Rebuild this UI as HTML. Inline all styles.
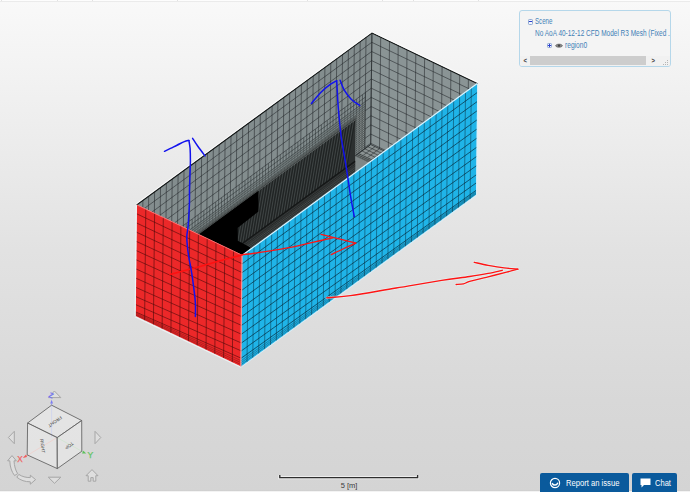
<!DOCTYPE html>
<html>
<head>
<meta charset="utf-8">
<title>Scene</title>
<style>
html,body{margin:0;padding:0;}
body{width:690px;height:492px;overflow:hidden;position:relative;font-family:"Liberation Sans",sans-serif;
background:linear-gradient(to bottom,#f9f9f9 0px,#efefef 110px,#e2e2e2 250px,#d8d8d8 400px,#d4d4d4 492px);}
#topline{position:absolute;left:0;top:0;width:690px;height:2px;background:linear-gradient(#fdfdfd 0,#fdfdfd 50%,#ebebeb 50%,#ebebeb 100%);}
#topline i{position:absolute;top:0;width:1px;height:1px;background:#e2e2e2;}
#botline{position:absolute;left:0;top:490px;width:690px;height:2px;background:linear-gradient(#cecece 0,#d2d2d2 45%,#f2f2f2 55%,#f4f4f4 100%);}
svg{position:absolute;left:0;top:0;}
#panel{position:absolute;left:519px;top:9.5px;width:150px;height:55.5px;border:1px solid #b5d7ea;border-radius:3px;background:#f4f4f4;box-sizing:content-box;overflow:hidden;}
#panel .t{position:absolute;white-space:nowrap;color:#3f80b6;font-size:8.3px;line-height:10px;transform-origin:0 50%;}
#sb{position:absolute;left:0px;top:45px;width:150px;height:10.5px;background:#f1f1f1;}
#sb .thumb{position:absolute;left:10px;top:0px;width:116px;height:9.6px;background:#cdcdcd;}
#sb .a{position:absolute;top:-0.5px;font-size:8px;line-height:11px;color:#444;font-weight:bold;transform:scaleX(.75);}
.ico{position:absolute;width:3.6px;height:3.6px;border:0.9px solid #8fa9d2;border-radius:1.3px;background:#f4f7fd;box-sizing:content-box;}
.ico i{position:absolute;left:0.5px;top:1.4px;width:2.6px;height:0.8px;background:#2d3fd0;}
.ico b{position:absolute;left:1.4px;top:0.5px;width:0.8px;height:2.6px;background:#2d3fd0;}
.btn{position:absolute;top:473px;height:19px;background:#0a5a9c;color:#fff;font-size:8.4px;border-radius:2px 2px 0 0;}
.btn span{position:absolute;top:5px;line-height:10px;white-space:nowrap;transform-origin:0 50%;}
#scaletxt{position:absolute;left:318.8px;width:60px;text-align:center;top:481px;font-size:8px;color:#3a3a3a;line-height:10px;transform:scaleX(.94);}
.cube{font-family:"Liberation Sans",sans-serif;font-size:4.6px;fill:#484848;}
</style>
</head>
<body>
<div id="topline"><i style="left:1px"></i><i style="left:57px"></i><i style="left:92px"></i><i style="left:177px"></i><i style="left:307px"></i><i style="left:382px"></i><i style="left:413px"></i><i style="left:478px"></i></div>
<svg id="mesh" width="690" height="492" viewBox="0 0 690 492">
<defs><clipPath id="topclip"><polygon points="137.0,204.7 242.3,255.0 477.2,83.4 371.9,33.1" /></clipPath><clipPath id="bandclip"><polygon points="136.2,280.1 355.8,119.7 355.2,174.4 118.0,347.7 118.6,293.0" /></clipPath></defs>
<g clip-path="url(#topclip)"><polygon points="137.0,204.7 371.9,33.1 370.7,144.5 135.8,316.1" fill="#838d8e"/><polygon points="371.9,33.1 477.2,83.4 476.0,194.8 370.7,144.5" fill="#8a9495"/><polygon points="135.8,316.1 370.7,144.5 476.0,194.8 241.1,366.4" fill="#7f8787"/><polygon points="136.2,275.7 365.3,108.4 364.8,148.8 135.8,316.1" fill="#848c8c"/><path d="M137.0 204.7L136.4 260.0M142.9 200.4L142.3 255.7M148.7 196.1L148.1 251.4M154.6 191.8L154.0 247.1M160.5 187.5L159.9 242.8M166.4 183.2L165.8 238.6M172.2 179.0L171.6 234.3M178.1 174.7L177.5 230.0M184.0 170.4L183.4 225.7M189.9 166.1L189.3 221.4M195.7 161.8L195.1 217.1M201.6 157.5L201.0 212.8M207.5 153.2L206.9 208.5M213.3 148.9L212.7 204.2M219.2 144.6L218.6 199.9M225.1 140.3L224.5 195.6M231.0 136.1L230.4 191.4M236.8 131.8L236.2 187.1M242.7 127.5L242.1 182.8M248.6 123.2L248.0 178.5M254.5 118.9L253.9 174.2M260.3 114.6L259.7 169.9M266.2 110.3L265.6 165.6M272.1 106.0L271.5 161.3M277.9 101.7L277.3 157.0M283.8 97.4L283.2 152.8M289.7 93.2L289.1 148.5M295.6 88.9L295.0 144.2M301.4 84.6L300.8 139.9M307.3 80.3L306.7 135.6M313.2 76.0L312.6 131.3M319.0 71.7L318.5 127.0M324.9 67.4L324.3 122.7M330.8 63.1L330.2 118.4M336.7 58.8L336.1 114.1M342.5 54.5L341.9 109.8M348.4 50.3L347.8 105.6M354.3 46.0L353.7 101.3M360.2 41.7L359.6 97.0M366.0 37.4L364.8 148.8M371.9 33.1L370.7 144.5M136.9 213.9L371.8 42.3M136.8 223.1L371.7 51.5M136.7 232.2L371.6 60.6M136.6 241.4L371.5 69.8M136.5 250.6L371.4 79.0M136.4 259.8L371.3 88.2M365.3 101.6L371.2 97.4M365.2 110.8L371.1 106.5M365.1 120.0L371.0 115.7M365.0 129.2L370.9 124.9M364.9 138.4L370.8 134.1M364.8 147.5L370.7 143.3" fill="none" stroke="#23282a" stroke-width="0.75" stroke-opacity="0.75"/><path d="M136.4 260.0L136.3 268.9M139.3 257.9L139.2 266.8M142.3 255.7L142.2 264.6M145.2 253.6L145.1 262.5M148.1 251.4L148.1 260.3M151.1 249.3L151.0 258.2M154.0 247.1L153.9 256.0M157.0 245.0L156.9 253.9M159.9 242.8L159.8 251.7M162.8 240.7L162.7 249.6M165.8 238.6L165.7 247.4M168.7 236.4L168.6 245.3M171.6 234.3L171.5 243.2M174.6 232.1L174.5 241.0M177.5 230.0L177.4 238.9M180.4 227.8L180.4 236.7M183.4 225.7L183.3 234.6M186.3 223.5L186.2 232.4M189.3 221.4L189.2 230.3M192.2 219.2L192.1 228.1M195.1 217.1L195.0 226.0M198.1 215.0L198.0 223.9M201.0 212.8L200.9 221.7M203.9 210.7L203.8 219.6M206.9 208.5L206.8 217.4M209.8 206.4L209.7 215.3M212.7 204.2L212.7 213.1M215.7 202.1L215.6 211.0M218.6 199.9L218.5 208.8M221.6 197.8L221.5 206.7M224.5 195.6L224.4 204.6M227.4 193.5L227.3 202.4M230.4 191.4L230.3 200.3M233.3 189.2L233.2 198.1M236.2 187.1L236.1 196.0M239.2 184.9L239.1 193.8M242.1 182.8L242.0 191.7M245.0 180.6L244.9 189.5M248.0 178.5L247.9 187.4M250.9 176.3L250.8 185.2M253.9 174.2L253.8 183.1M256.8 172.1L256.7 181.0M259.7 169.9L259.6 178.8M262.7 167.8L262.6 176.7M265.6 165.6L265.5 174.5M268.5 163.5L268.4 172.4M271.5 161.3L271.4 170.2M274.4 159.2L274.3 168.1M277.3 157.0L277.2 165.9M280.3 154.9L280.2 163.8M283.2 152.8L283.1 161.6M286.2 150.6L286.1 159.5M289.1 148.5L289.0 157.4M292.0 146.3L291.9 155.2M295.0 144.2L294.9 153.1M297.9 142.0L297.8 150.9M300.8 139.9L300.7 148.8M303.8 137.7L303.7 146.6M306.7 135.6L306.6 144.5M309.6 133.4L309.5 142.3M312.6 131.3L312.5 140.2M315.5 129.2L315.4 138.1M318.5 127.0L318.4 135.9M321.4 124.9L321.3 133.8M324.3 122.7L324.2 131.6M327.3 120.6L327.2 129.5M330.2 118.4L330.1 127.3M333.1 116.3L333.0 125.2M336.1 114.1L336.0 123.0M339.0 112.0L338.9 120.9M341.9 109.8L341.8 118.7M344.9 107.7L344.8 116.6M347.8 105.6L347.7 114.5M350.8 103.4L350.7 112.3M353.7 101.3L353.6 110.2M356.6 99.1L356.5 108.0M359.6 97.0L359.5 105.9M362.5 94.8L362.4 103.7M365.4 92.7L365.3 101.6M136.4 264.4L365.4 97.1M136.3 268.9L365.3 101.6" fill="none" stroke="#23282a" stroke-width="0.7" stroke-opacity="0.7"/><path d="M136.3 268.9L136.2 275.7M139.2 266.8L139.2 273.6M142.2 264.6L142.1 271.4M145.1 262.5L145.0 269.3M148.1 260.3L148.0 267.1M151.0 258.2L150.9 265.0M153.9 256.0L153.9 262.8M156.9 253.9L156.8 260.7M159.8 251.7L159.7 258.5M162.7 249.6L162.7 256.4M165.7 247.4L165.6 254.2M168.6 245.3L168.5 252.1M171.5 243.2L171.5 250.0M174.5 241.0L174.4 247.8M177.4 238.9L177.3 245.7M180.4 236.7L180.3 243.5M183.3 234.6L183.2 241.4M186.2 232.4L186.2 239.2M189.2 230.3L189.1 237.1M192.1 228.1L192.0 234.9M195.0 226.0L195.0 232.8M198.0 223.9L197.9 230.7M200.9 221.7L200.8 228.5M203.8 219.6L203.8 226.4M206.8 217.4L206.7 224.2M209.7 215.3L209.6 222.1M212.7 213.1L212.6 219.9M215.6 211.0L215.5 217.8M218.5 208.8L218.5 215.6M221.5 206.7L221.4 213.5M224.4 204.6L224.3 211.3M227.3 202.4L227.3 209.2M230.3 200.3L230.2 207.1M233.2 198.1L233.1 204.9M236.1 196.0L236.1 202.8M239.1 193.8L239.0 200.6M242.0 191.7L241.9 198.5M244.9 189.5L244.9 196.3M247.9 187.4L247.8 194.2M250.8 185.2L250.7 192.0M253.8 183.1L253.7 189.9M256.7 181.0L256.6 187.8M259.6 178.8L259.6 185.6M262.6 176.7L262.5 183.5M265.5 174.5L265.4 181.3M268.4 172.4L268.4 179.2M271.4 170.2L271.3 177.0M274.3 168.1L274.2 174.9M277.2 165.9L277.2 172.7M280.2 163.8L280.1 170.6M283.1 161.6L283.0 168.4M286.1 159.5L286.0 166.3M289.0 157.4L288.9 164.2M291.9 155.2L291.9 162.0M294.9 153.1L294.8 159.9M297.8 150.9L297.7 157.7M300.7 148.8L300.7 155.6M303.7 146.6L303.6 153.4M306.6 144.5L306.5 151.3M309.5 142.3L309.5 149.1M312.5 140.2L312.4 147.0M315.4 138.1L315.3 144.9M318.4 135.9L318.3 142.7M321.3 133.8L321.2 140.6M324.2 131.6L324.2 138.4M327.2 129.5L327.1 136.3M330.1 127.3L330.0 134.1M333.0 125.2L333.0 132.0M336.0 123.0L335.9 129.8M338.9 120.9L338.8 127.7M341.8 118.7L341.8 125.5M344.8 116.6L344.7 123.4M347.7 114.5L347.6 121.3M350.7 112.3L350.6 119.1M353.6 110.2L353.5 117.0M356.5 108.0L356.5 114.8M359.5 105.9L359.4 112.7M362.4 103.7L362.3 110.5M365.3 101.6L365.3 108.4M136.3 271.2L365.3 103.9M136.3 273.4L365.3 106.1M136.2 275.7L365.3 108.4" fill="none" stroke="#23282a" stroke-width="0.65" stroke-opacity="0.6"/><path d="M137.8 267.8L137.7 274.6M140.7 265.7L140.6 272.5M143.6 263.5L143.6 270.3M146.6 261.4L146.5 268.2M149.5 259.2L149.4 266.0M152.5 257.1L152.4 263.9M155.4 255.0L155.3 261.8M158.3 252.8L158.3 259.6M161.3 250.7L161.2 257.5M164.2 248.5L164.1 255.3M167.1 246.4L167.1 253.2M170.1 244.2L170.0 251.0M173.0 242.1L172.9 248.9M175.9 239.9L175.9 246.7M178.9 237.8L178.8 244.6M181.8 235.7L181.7 242.5M184.8 233.5L184.7 240.3M187.7 231.4L187.6 238.2M190.6 229.2L190.6 236.0M193.6 227.1L193.5 233.9M196.5 224.9L196.4 231.7M199.4 222.8L199.4 229.6M202.4 220.6L202.3 227.4M205.3 218.5L205.2 225.3M208.2 216.3L208.2 223.1M211.2 214.2L211.1 221.0M214.1 212.1L214.0 218.9M217.1 209.9L217.0 216.7M220.0 207.8L219.9 214.6M222.9 205.6L222.9 212.4M225.9 203.5L225.8 210.3M228.8 201.3L228.7 208.1M231.7 199.2L231.7 206.0M234.7 197.0L234.6 203.8M237.6 194.9L237.5 201.7M240.5 192.8L240.5 199.6M243.5 190.6L243.4 197.4M246.4 188.5L246.3 195.3M249.4 186.3L249.3 193.1M252.3 184.2L252.2 191.0M255.2 182.0L255.2 188.8M258.2 179.9L258.1 186.7M261.1 177.7L261.0 184.5M264.0 175.6L264.0 182.4M267.0 173.4L266.9 180.2M269.9 171.3L269.8 178.1M272.8 169.2L272.8 176.0M275.8 167.0L275.7 173.8M278.7 164.9L278.6 171.7M281.7 162.7L281.6 169.5M284.6 160.6L284.5 167.4M287.5 158.4L287.5 165.2M290.5 156.3L290.4 163.1M293.4 154.1L293.3 160.9M296.3 152.0L296.3 158.8M299.3 149.9L299.2 156.7M302.2 147.7L302.1 154.5M305.1 145.6L305.1 152.4M308.1 143.4L308.0 150.2M311.0 141.3L310.9 148.1M314.0 139.1L313.9 145.9M316.9 137.0L316.8 143.8M319.8 134.8L319.8 141.6M322.8 132.7L322.7 139.5M325.7 130.5L325.6 137.3M328.6 128.4L328.6 135.2M331.6 126.3L331.5 133.1M334.5 124.1L334.4 130.9M337.4 122.0L337.4 128.8M340.4 119.8L340.3 126.6M343.3 117.7L343.2 124.5M346.3 115.5L346.2 122.3M349.2 113.4L349.1 120.2M352.1 111.2L352.0 118.0M355.1 109.1L355.0 115.9M358.0 107.0L357.9 113.8M360.9 104.8L360.9 111.6M363.9 102.7L363.8 109.5" fill="none" stroke="#23282a" stroke-width="0.5" stroke-opacity="0.3"/><path d="M136.2 276.9L355.9 116.4M136.2 278.0L355.8 117.6M136.2 279.1L355.8 118.7" fill="none" stroke="#1c2020" stroke-width="0.55" stroke-opacity="0.6"/><path d="M355.8 117.3L365.2 110.4M355.8 119.3L365.2 112.4M355.8 121.3L365.2 114.4M355.8 123.3L365.2 116.4M355.8 125.3L365.2 118.4M355.7 127.3L365.1 120.4M355.7 129.3L365.1 122.4M355.7 131.3L365.1 124.4M355.7 133.3L365.1 126.4M355.7 135.3L365.0 128.4M355.6 137.3L365.0 130.4M355.6 139.3L365.0 132.4M355.6 141.3L365.0 134.4M355.6 143.3L365.0 136.4M355.5 145.3L364.9 138.4M355.5 147.3L364.9 140.4M355.5 149.3L364.9 142.4M355.5 151.3L364.9 144.4M355.5 153.3L364.9 146.4M355.4 155.3L364.8 148.4" fill="none" stroke="#1c2020" stroke-width="0.7" stroke-opacity="0.6"/><path d="M136.2 275.7L136.2 280.1M137.7 274.6L137.7 279.0M139.2 273.6L139.1 278.0M140.6 272.5L140.6 276.9M142.1 271.4L142.1 275.8M143.6 270.3L143.5 274.7M145.0 269.3L145.0 273.7M146.5 268.2L146.5 272.6M148.0 267.1L147.9 271.5M149.4 266.0L149.4 270.4M150.9 265.0L150.9 269.4M152.4 263.9L152.3 268.3M153.9 262.8L153.8 267.2M155.3 261.8L155.3 266.2M156.8 260.7L156.7 265.1M158.3 259.6L158.2 264.0M159.7 258.5L159.7 262.9M161.2 257.5L161.1 261.9M162.7 256.4L162.6 260.8M164.1 255.3L164.1 259.7M165.6 254.2L165.6 258.6M167.1 253.2L167.0 257.6M168.5 252.1L168.5 256.5M170.0 251.0L170.0 255.4M171.5 250.0L171.4 254.4M172.9 248.9L172.9 253.3M174.4 247.8L174.4 252.2M175.9 246.7L175.8 251.1M177.3 245.7L177.3 250.1M178.8 244.6L178.8 249.0M180.3 243.5L180.2 247.9M181.7 242.5L181.7 246.9M183.2 241.4L183.2 245.8M184.7 240.3L184.6 244.7M186.2 239.2L186.1 243.6M187.6 238.2L187.6 242.6M189.1 237.1L189.0 241.5M190.6 236.0L190.5 240.4M192.0 234.9L192.0 239.3M193.5 233.9L193.4 238.3M195.0 232.8L194.9 237.2M196.4 231.7L196.4 236.1M197.9 230.7L197.8 235.1M199.4 229.6L199.3 234.0M200.8 228.5L200.8 232.9M202.3 227.4L202.3 231.8M203.8 226.4L203.7 230.8M205.2 225.3L205.2 229.7M206.7 224.2L206.7 228.6M208.2 223.1L208.1 227.5M209.6 222.1L209.6 226.5M211.1 221.0L211.1 225.4M212.6 219.9L212.5 224.3M214.0 218.9L214.0 223.3M215.5 217.8L215.5 222.2M217.0 216.7L216.9 221.1M218.5 215.6L218.4 220.0M219.9 214.6L219.9 219.0M221.4 213.5L221.3 217.9M222.9 212.4L222.8 216.8M224.3 211.3L224.3 215.8M225.8 210.3L225.7 214.7M227.3 209.2L227.2 213.6M228.7 208.1L228.7 212.5M230.2 207.1L230.1 211.5M231.7 206.0L231.6 210.4M233.1 204.9L233.1 209.3M234.6 203.8L234.6 208.2M236.1 202.8L236.0 207.2M237.5 201.7L237.5 206.1M239.0 200.6L239.0 205.0M240.5 199.6L240.4 204.0M241.9 198.5L241.9 202.9M243.4 197.4L243.4 201.8M244.9 196.3L244.8 200.7M246.3 195.3L246.3 199.7M247.8 194.2L247.8 198.6M249.3 193.1L249.2 197.5M250.7 192.0L250.7 196.4M252.2 191.0L252.2 195.4M253.7 189.9L253.6 194.3M255.2 188.8L255.1 193.2M256.6 187.8L256.6 192.2M258.1 186.7L258.0 191.1M259.6 185.6L259.5 190.0M261.0 184.5L261.0 188.9M262.5 183.5L262.4 187.9M264.0 182.4L263.9 186.8M265.4 181.3L265.4 185.7M266.9 180.2L266.9 184.6M268.4 179.2L268.3 183.6M269.8 178.1L269.8 182.5M271.3 177.0L271.3 181.4M272.8 176.0L272.7 180.4M274.2 174.9L274.2 179.3M275.7 173.8L275.7 178.2M277.2 172.7L277.1 177.1M278.6 171.7L278.6 176.1M280.1 170.6L280.1 175.0M281.6 169.5L281.5 173.9M283.0 168.4L283.0 172.8M284.5 167.4L284.5 171.8M286.0 166.3L285.9 170.7M287.5 165.2L287.4 169.6M288.9 164.2L288.9 168.6M290.4 163.1L290.3 167.5M291.9 162.0L291.8 166.4M293.3 160.9L293.3 165.3M294.8 159.9L294.7 164.3M296.3 158.8L296.2 163.2M297.7 157.7L297.7 162.1M299.2 156.7L299.1 161.1M300.7 155.6L300.6 160.0M302.1 154.5L302.1 158.9M303.6 153.4L303.6 157.8M305.1 152.4L305.0 156.8M306.5 151.3L306.5 155.7M308.0 150.2L308.0 154.6M309.5 149.1L309.4 153.5M310.9 148.1L310.9 152.5M312.4 147.0L312.4 151.4M313.9 145.9L313.8 150.3M315.3 144.9L315.3 149.3M316.8 143.8L316.8 148.2M318.3 142.7L318.2 147.1M319.8 141.6L319.7 146.0M321.2 140.6L321.2 145.0M322.7 139.5L322.6 143.9M324.2 138.4L324.1 142.8M325.6 137.3L325.6 141.7M327.1 136.3L327.0 140.7M328.6 135.2L328.5 139.6M330.0 134.1L330.0 138.5M331.5 133.1L331.4 137.5M333.0 132.0L332.9 136.4M334.4 130.9L334.4 135.3M335.9 129.8L335.9 134.2M337.4 128.8L337.3 133.2M338.8 127.7L338.8 132.1M340.3 126.6L340.3 131.0M341.8 125.5L341.7 129.9M343.2 124.5L343.2 128.9M344.7 123.4L344.7 127.8M346.2 122.3L346.1 126.7M347.6 121.3L347.6 125.7M349.1 120.2L349.1 124.6M350.6 119.1L350.5 123.5M352.0 118.0L352.0 122.4M353.5 117.0L353.5 121.4M355.0 115.9L354.9 120.3M356.5 114.8L356.0 155.2M359.4 112.7L359.0 153.1M362.3 110.5L361.9 150.9M365.3 108.4L364.8 148.8" fill="none" stroke="#1c2020" stroke-width="0.6" stroke-opacity="0.45"/><polygon points="136.2,278.5 355.8,118.1 355.8,119.7 136.2,280.1" fill="#101212" fill-opacity="0.3"/><path d="M371.9 33.1L370.7 144.5M380.7 37.3L379.5 148.7M389.5 41.5L388.3 152.9M398.2 45.7L397.0 157.1M407.0 49.9L405.8 161.3M415.8 54.1L414.6 165.5M424.6 58.2L423.4 169.7M433.3 62.4L432.1 173.8M442.1 66.6L440.9 178.0M450.9 70.8L449.7 182.2M459.7 75.0L458.5 186.4M468.4 79.2L467.2 190.6M477.2 83.4L476.0 194.8M371.8 42.3L477.1 92.6M371.7 51.5L477.0 101.8M371.6 60.6L476.9 110.9M371.5 69.8L476.8 120.1M371.4 79.0L476.7 129.3M371.3 88.2L476.6 138.5M371.2 97.4L476.5 147.7M371.1 106.5L476.4 156.8M371.0 115.7L476.3 166.0M370.9 124.9L476.2 175.2M370.8 134.1L476.1 184.4M370.7 143.3L476.0 193.6" fill="none" stroke="#23282a" stroke-width="0.75" stroke-opacity="0.75"/><polygon points="355.4,155.7 370.7,144.5 388.3,152.9 373.0,164.0" fill="#8b9393"/><path d="M359.0 153.1L370.7 144.5M363.3 155.2L375.1 146.6M367.7 157.3L379.5 148.7M372.1 159.4L383.9 150.8M376.5 161.5L388.3 152.9M361.9 150.9L379.4 159.3M364.8 148.8L382.4 157.2M367.8 146.6L385.3 155.0" fill="none" stroke="#23282a" stroke-width="0.8" stroke-opacity="0.7"/><polygon points="355.4,155.7 359.0,153.1 376.5,161.5 373.0,164.0" fill="#737b7b"/><path d="M355.4 155.7L359.0 153.1M357.6 156.7L361.1 154.1M359.8 157.7L363.3 155.2M362.0 158.8L365.5 156.2M364.2 159.8L367.7 157.3M366.4 160.9L369.9 158.3M368.6 161.9L372.1 159.4M370.8 163.0L374.3 160.4M373.0 164.0L376.5 161.5M355.4 155.7L373.0 164.0M356.9 154.6L374.4 163.0M358.4 153.5L375.9 161.9" fill="none" stroke="#1c2020" stroke-width="0.6" stroke-opacity="0.6"/><path d="M355.4 155.7L370.7 144.5M370.7 144.5L388.3 152.9" fill="none" stroke="#23282a" stroke-width="1" stroke-opacity="0.8"/><g clip-path="url(#bandclip)"><polygon points="136.2,280.1 355.8,119.7 355.2,174.4 118.0,347.7 118.6,293.0" fill="#2c3030"/><path d="M118.6 293.0L110.5 339.7M121.5 290.8L113.4 337.6M124.4 288.7L116.4 335.5M127.4 286.5L119.3 333.3M130.3 284.4L122.2 331.2M133.3 282.2L125.2 329.0M136.2 280.1L128.1 326.9M139.1 278.0L131.0 324.7M142.1 275.8L134.0 322.6M145.0 273.7L136.9 320.4M147.9 271.5L139.9 318.3M150.9 269.4L142.8 316.2M153.8 267.2L145.7 314.0M156.7 265.1L148.7 311.9M159.7 262.9L151.6 309.7M162.6 260.8L154.5 307.6M165.6 258.6L157.5 305.4M168.5 256.5L160.4 303.3M171.4 254.4L163.3 301.1M174.4 252.2L166.3 299.0M177.3 250.1L169.2 296.8M180.2 247.9L172.2 294.7M183.2 245.8L175.1 292.6M186.1 243.6L178.0 290.4M189.0 241.5L181.0 288.3M192.0 239.3L183.9 286.1M194.9 237.2L186.8 284.0M197.8 235.1L189.8 281.8M200.8 232.9L192.7 279.7M203.7 230.8L195.6 277.5M206.7 228.6L198.6 275.4M209.6 226.5L201.5 273.3M212.5 224.3L204.5 271.1M215.5 222.2L207.4 269.0M218.4 220.0L210.3 266.8M221.3 217.9L213.3 264.7M224.3 215.8L216.2 262.5M227.2 213.6L219.1 260.4M230.1 211.5L222.1 258.2M233.1 209.3L225.0 256.1M236.0 207.2L227.9 253.9M239.0 205.0L230.9 251.8M241.9 202.9L233.8 249.7M244.8 200.7L236.8 247.5M247.8 198.6L239.7 245.4M250.7 196.4L242.6 243.2M253.6 194.3L245.6 241.1M256.6 192.2L248.5 238.9M259.5 190.0L251.4 236.8M262.4 187.9L254.4 234.6M265.4 185.7L257.3 232.5M268.3 183.6L260.2 230.4M271.3 181.4L263.2 228.2M274.2 179.3L266.1 226.1M277.1 177.1L269.0 223.9M280.1 175.0L272.0 221.8M283.0 172.8L274.9 219.6M285.9 170.7L277.9 217.5M288.9 168.6L280.8 215.3M291.8 166.4L283.7 213.2M294.7 164.3L286.7 211.0M297.7 162.1L289.6 208.9M300.6 160.0L292.5 206.8M303.6 157.8L295.5 204.6M306.5 155.7L298.4 202.5M309.4 153.5L301.3 200.3M312.4 151.4L304.3 198.2M315.3 149.3L307.2 196.0M318.2 147.1L310.2 193.9M321.2 145.0L313.1 191.7M324.1 142.8L316.0 189.6M327.0 140.7L319.0 187.5M330.0 138.5L321.9 185.3M332.9 136.4L324.8 183.2M335.9 134.2L327.8 181.0M338.8 132.1L330.7 178.9M341.7 129.9L333.6 176.7M344.7 127.8L336.6 174.6M347.6 125.7L339.5 172.4M350.5 123.5L342.5 170.3M353.5 121.4L345.4 168.1" fill="none" stroke="#596060" stroke-width="0.9" stroke-opacity="0.45"/><path d="M120.0 291.9L112.0 338.7M123.0 289.8L114.9 336.5M125.9 287.6L117.8 334.4M128.8 285.5L120.8 332.2M131.8 283.3L123.7 330.1M134.7 281.2L126.6 327.9M137.7 279.0L129.6 325.8M140.6 276.9L132.5 323.7M143.5 274.7L135.5 321.5M146.5 272.6L138.4 319.4M149.4 270.4L141.3 317.2M152.3 268.3L144.3 315.1M155.3 266.2L147.2 312.9M158.2 264.0L150.1 310.8M161.1 261.9L153.1 308.6M164.1 259.7L156.0 306.5M167.0 257.6L158.9 304.4M170.0 255.4L161.9 302.2M172.9 253.3L164.8 300.1M175.8 251.1L167.7 297.9M178.8 249.0L170.7 295.8M181.7 246.9L173.6 293.6M184.6 244.7L176.6 291.5M187.6 242.6L179.5 289.3M190.5 240.4L182.4 287.2M193.4 238.3L185.4 285.0M196.4 236.1L188.3 282.9M199.3 234.0L191.2 280.8M202.3 231.8L194.2 278.6M205.2 229.7L197.1 276.5M208.1 227.5L200.0 274.3M211.1 225.4L203.0 272.2M214.0 223.3L205.9 270.0M216.9 221.1L208.9 267.9M219.9 219.0L211.8 265.7M222.8 216.8L214.7 263.6M225.7 214.7L217.7 261.5M228.7 212.5L220.6 259.3M231.6 210.4L223.5 257.2M234.6 208.2L226.5 255.0M237.5 206.1L229.4 252.9M240.4 204.0L232.3 250.7M243.4 201.8L235.3 248.6M246.3 199.7L238.2 246.4M249.2 197.5L241.2 244.3M252.2 195.4L244.1 242.1M255.1 193.2L247.0 240.0M258.0 191.1L250.0 237.9M261.0 188.9L252.9 235.7M263.9 186.8L255.8 233.6M266.9 184.6L258.8 231.4M269.8 182.5L261.7 229.3M272.7 180.4L264.6 227.1M275.7 178.2L267.6 225.0M278.6 176.1L270.5 222.8M281.5 173.9L273.5 220.7M284.5 171.8L276.4 218.6M287.4 169.6L279.3 216.4M290.3 167.5L282.3 214.3M293.3 165.3L285.2 212.1M296.2 163.2L288.1 210.0M299.1 161.1L291.1 207.8M302.1 158.9L294.0 205.7M305.0 156.8L296.9 203.5M308.0 154.6L299.9 201.4M310.9 152.5L302.8 199.2M313.8 150.3L305.8 197.1M316.8 148.2L308.7 195.0M319.7 146.0L311.6 192.8M322.6 143.9L314.6 190.7M325.6 141.7L317.5 188.5M328.5 139.6L320.4 186.4M331.4 137.5L323.4 184.2M334.4 135.3L326.3 182.1M337.3 133.2L329.2 179.9M340.3 131.0L332.2 177.8M343.2 128.9L335.1 175.7M346.1 126.7L338.1 173.5M349.1 124.6L341.0 171.4M352.0 122.4L343.9 169.2M354.9 120.3L346.9 167.1" fill="none" stroke="#0c0e0e" stroke-width="0.9" stroke-opacity="0.45"/><polygon points="118.1,334.2 355.4,160.9 355.2,174.4 118.0,347.7" fill="#383c3c"/><polygon points="118.1,338.7 355.3,165.4 355.2,174.4 118.0,347.7" fill="#444949"/><path d="M118.1 335.2L355.4 161.9M118.1 337.3L355.3 164.0M118.1 339.4L355.3 166.1M118.0 341.5L355.3 168.2M118.0 343.6L355.3 170.3M118.0 345.7L355.3 172.4" fill="none" stroke="#1a1c1c" stroke-width="0.7" stroke-opacity="0.7"/><path d="M118.1 334.2L125.0 342.5M119.6 333.1L126.5 341.4M121.1 332.0L128.0 340.4M122.5 331.0L129.4 339.3M124.0 329.9L130.9 338.2M125.5 328.8L132.4 337.2M126.9 327.7L133.8 336.1M128.4 326.7L135.3 335.0M129.9 325.6L136.8 333.9M131.3 324.5L138.2 332.9M132.8 323.4L139.7 331.8M134.3 322.4L141.2 330.7M135.7 321.3L142.6 329.7M137.2 320.2L144.1 328.6M138.7 319.2L145.6 327.5M140.1 318.1L147.0 326.4M141.6 317.0L148.5 325.4M143.1 315.9L150.0 324.3M144.6 314.9L151.5 323.2M146.0 313.8L152.9 322.1M147.5 312.7L154.4 321.1M149.0 311.6L155.9 320.0M150.4 310.6L157.3 318.9M151.9 309.5L158.8 317.9M153.4 308.4L160.3 316.8M154.8 307.4L161.7 315.7M156.3 306.3L163.2 314.6M157.8 305.2L164.7 313.6M159.2 304.1L166.1 312.5M160.7 303.1L167.6 311.4M162.2 302.0L169.1 310.3M163.6 300.9L170.5 309.3M165.1 299.9L172.0 308.2M166.6 298.8L173.5 307.1M168.0 297.7L174.9 306.1M169.5 296.6L176.4 305.0M171.0 295.6L177.9 303.9M172.4 294.5L179.3 302.8M173.9 293.4L180.8 301.8M175.4 292.3L182.3 300.7M176.9 291.3L183.8 299.6M178.3 290.2L185.2 298.5M179.8 289.1L186.7 297.5M181.3 288.1L188.2 296.4M182.7 287.0L189.6 295.3M184.2 285.9L191.1 294.3M185.7 284.8L192.6 293.2M187.1 283.8L194.0 292.1M188.6 282.7L195.5 291.0M190.1 281.6L197.0 290.0M191.5 280.5L198.4 288.9M193.0 279.5L199.9 287.8M194.5 278.4L201.4 286.8M195.9 277.3L202.8 285.7M197.4 276.3L204.3 284.6M198.9 275.2L205.8 283.5M200.3 274.1L207.2 282.5M201.8 273.0L208.7 281.4M203.3 272.0L210.2 280.3M204.7 270.9L211.6 279.2M206.2 269.8L213.1 278.2M207.7 268.7L214.6 277.1M209.2 267.7L216.1 276.0M210.6 266.6L217.5 275.0M212.1 265.5L219.0 273.9M213.6 264.5L220.5 272.8M215.0 263.4L221.9 271.7M216.5 262.3L223.4 270.7M218.0 261.2L224.9 269.6M219.4 260.2L226.3 268.5M220.9 259.1L227.8 267.4M222.4 258.0L229.3 266.4M223.8 256.9L230.7 265.3M225.3 255.9L232.2 264.2M226.8 254.8L233.7 263.2M228.2 253.7L235.1 262.1M229.7 252.7L236.6 261.0M231.2 251.6L238.1 259.9M232.6 250.5L239.5 258.9M234.1 249.4L241.0 257.8M235.6 248.4L242.5 256.7M237.0 247.3L243.9 255.6M238.5 246.2L245.4 254.6M240.0 245.2L246.9 253.5M241.4 244.1L248.4 252.4M242.9 243.0L249.8 251.4M244.4 241.9L251.3 250.3M245.9 240.9L252.8 249.2M247.3 239.8L254.2 248.1M248.8 238.7L255.7 247.1M250.3 237.6L257.2 246.0M251.7 236.6L258.6 244.9M253.2 235.5L260.1 243.9M254.7 234.4L261.6 242.8M256.1 233.4L263.0 241.7M257.6 232.3L264.5 240.6M259.1 231.2L266.0 239.6M260.5 230.1L267.4 238.5M262.0 229.1L268.9 237.4M263.5 228.0L270.4 236.3M264.9 226.9L271.8 235.3M266.4 225.8L273.3 234.2M267.9 224.8L274.8 233.1M269.3 223.7L276.2 232.1M270.8 222.6L277.7 231.0M272.3 221.6L279.2 229.9M273.7 220.5L280.6 228.8M275.2 219.4L282.1 227.8M276.7 218.3L283.6 226.7M278.2 217.3L285.1 225.6M279.6 216.2L286.5 224.5M281.1 215.1L288.0 223.5M282.6 214.0L289.5 222.4M284.0 213.0L290.9 221.3M285.5 211.9L292.4 220.3M287.0 210.8L293.9 219.2M288.4 209.8L295.3 218.1M289.9 208.7L296.8 217.0M291.4 207.6L298.3 216.0M292.8 206.5L299.7 214.9M294.3 205.5L301.2 213.8M295.8 204.4L302.7 212.7M297.2 203.3L304.1 211.7M298.7 202.3L305.6 210.6M300.2 201.2L307.1 209.5M301.6 200.1L308.5 208.5M303.1 199.0L310.0 207.4M304.6 198.0L311.5 206.3M306.0 196.9L312.9 205.2M307.5 195.8L314.4 204.2M309.0 194.7L315.9 203.1M310.5 193.7L317.4 202.0M311.9 192.6L318.8 201.0M313.4 191.5L320.3 199.9M314.9 190.5L321.8 198.8M316.3 189.4L323.2 197.7M317.8 188.3L324.7 196.7M319.3 187.2L326.2 195.6M320.7 186.2L327.6 194.5M322.2 185.1L329.1 193.4M323.7 184.0L330.6 192.4M325.1 182.9L332.0 191.3M326.6 181.9L333.5 190.2M328.1 180.8L335.0 189.2M329.5 179.7L336.4 188.1M331.0 178.7L337.9 187.0M332.5 177.6L339.4 185.9M333.9 176.5L340.8 184.9M335.4 175.4L342.3 183.8M336.9 174.4L343.8 182.7M338.3 173.3L345.2 181.6M339.8 172.2L346.7 180.6M341.3 171.1L348.2 179.5M342.7 170.1L349.7 178.4M344.2 169.0L351.1 177.4M345.7 167.9L352.6 176.3M347.2 166.9L354.1 175.2M348.6 165.8L355.5 174.1M350.1 164.7L357.0 173.1M351.6 163.6L358.5 172.0M353.0 162.6L359.9 170.9M354.5 161.5L361.4 169.8" fill="none" stroke="#1a1c1c" stroke-width="0.5" stroke-opacity="0.5"/><path d="M118.1 334.2L355.4 160.9" fill="none" stroke="#141616" stroke-width="1.3"/><polygon points="195.0,233.0 258.4,189.0 258.4,211.5 237.8,227.8 237.8,240.8 250.4,247.6 246.0,256.0 228.0,252.0 190.0,240.0" fill="#000"/></g></g>
<path d="M137.0 204.7L371.9 33.1M371.9 33.1L477.2 83.4" fill="none" stroke="#101414" stroke-width="1.1" stroke-linecap="round"/>
<path d="M136.4 203.6L371.6 31.9M372.2 31.9L478.0 82.3" fill="none" stroke="#ffffff" stroke-width="1" stroke-opacity="0.75"/>
<g clip-path="url(#topclip)"><path d="M371.9 33.1L370.7 144.5" fill="none" stroke="#23282a" stroke-width="0.8" stroke-opacity="0.3"/></g>
<polygon points="137.0,204.7 242.3,255.0 241.1,366.4 135.8,316.1" fill="#ec2829"/>
<path d="M145.8 208.9L144.6 320.3M154.6 213.1L153.4 324.5M163.3 217.3L162.1 328.7M172.1 221.5L170.9 332.9M180.9 225.7L179.7 337.1M189.7 229.8L188.5 341.2M198.4 234.0L197.2 345.4M207.2 238.2L206.0 349.6M216.0 242.4L214.8 353.8M224.8 246.6L223.6 358.0M233.5 250.8L232.3 362.2" fill="none" stroke="#4d0a0a" stroke-width="0.8" stroke-opacity="0.75"/><path d="M136.9 213.9L242.2 263.8M136.8 223.1L242.1 272.6M136.7 232.3L242.0 281.4M136.6 241.5L241.9 290.2M136.5 250.7L241.8 299.0M136.4 259.9L241.7 307.8M136.3 269.1L241.6 316.6M136.2 278.3L241.5 325.4M136.1 287.5L241.4 334.2M136.0 296.7L241.4 343.0M135.9 304.7L241.3 350.9M135.8 312.0L241.2 358.2" fill="none" stroke="#4d0a0a" stroke-width="0.8" stroke-opacity="0.75"/><path d="M135.8 313.2L241.2 360.7M135.8 314.3L241.1 362.7M135.8 315.2L241.1 364.6" fill="none" stroke="#4d0a0a" stroke-width="0.6" stroke-opacity="0.55"/>
<path d="M137.0 205.0L242.3 255.3" fill="none" stroke="#ff7a7a" stroke-width="1" stroke-opacity="0.8"/>
<path d="M136.3 204.7L135.1 316.1M135.3 316.9L241.1 367.3" fill="none" stroke="#f4fbfd" stroke-width="1.1" stroke-opacity="0.7"/>
<polygon points="242.3,255.0 477.2,83.4 476.0,194.8 241.1,366.4" fill="#1fb4e8"/>
<path d="M248.2 250.7L247.0 362.1M254.0 246.4L252.8 357.8M259.9 242.1L258.7 353.5M265.8 237.8L264.6 349.2M271.7 233.6L270.5 344.9M277.5 229.3L276.3 340.7M283.4 225.0L282.2 336.4M289.3 220.7L288.1 332.1M295.2 216.4L294.0 327.8M301.0 212.1L299.8 323.5M306.9 207.8L305.7 319.2M312.8 203.5L311.6 314.9M318.6 199.2L317.4 310.6M324.5 194.9L323.3 306.3M330.4 190.7L329.2 302.0M336.3 186.4L335.1 297.8M342.1 182.1L340.9 293.5M348.0 177.8L346.8 289.2M353.9 173.5L352.7 284.9M359.8 169.2L358.6 280.6M365.6 164.9L364.4 276.3M371.5 160.6L370.3 272.0M377.4 156.3L376.2 267.7M383.2 152.0L382.0 263.4M389.1 147.8L387.9 259.1M395.0 143.5L393.8 254.9M400.9 139.2L399.7 250.6M406.7 134.9L405.5 246.3M412.6 130.6L411.4 242.0M418.5 126.3L417.3 237.7M424.3 122.0L423.1 233.4M430.2 117.7L429.0 229.1M436.1 113.4L434.9 224.8M442.0 109.1L440.8 220.5M447.8 104.8L446.6 216.2M453.7 100.6L452.5 212.0M459.6 96.3L458.4 207.7M465.5 92.0L464.3 203.4M471.3 87.7L470.1 199.1" fill="none" stroke="#062838" stroke-width="0.8" stroke-opacity="0.6"/><path d="M242.2 263.8L477.1 92.6M242.1 272.6L477.0 101.7M242.0 281.4L476.9 110.9M241.9 290.2L476.8 120.0M241.8 299.0L476.7 129.2M241.7 307.8L476.6 138.3M241.6 316.6L476.5 147.4M241.5 325.4L476.4 156.6M241.4 334.2L476.3 165.8M241.4 343.0L476.2 174.9M241.3 350.9L476.1 183.0M241.2 358.2L476.0 190.4" fill="none" stroke="#062838" stroke-width="0.85" stroke-opacity="0.8"/><path d="M241.2 360.7L476.0 191.7M241.1 362.7L476.0 192.8M241.1 364.6L476.0 193.8" fill="none" stroke="#062838" stroke-width="0.6" stroke-opacity="0.55"/>
<path d="M242.3 255.2L477.2 83.6" fill="none" stroke="#d8f3ff" stroke-width="1.2"/>
<path d="M242.0 255.0L240.8 366.4" fill="none" stroke="#ff9a9a" stroke-width="1.2" stroke-opacity="0.9"/>
<path d="M241.1 367.1L476.5 195.5M477.8 83.4L476.6 194.8" fill="none" stroke="#d4f2ff" stroke-width="1.0" stroke-opacity="0.75"/>
<path d="M170.0 274.5C175.0 273.2 191.7 268.8 200.0 266.5C208.3 264.2 212.9 262.7 220.0 260.7C227.1 258.7 238.8 255.7 242.5 254.7" fill="none" stroke="#ff1010" stroke-width="1.5" stroke-linecap="round"/>
<path d="M326.7 297.8C330.6 297.4 338.8 297.2 350.4 295.6C362.0 294.0 380.9 290.5 396.1 288.0C411.3 285.5 429.4 282.3 441.7 280.4C453.9 278.5 461.9 277.7 469.6 276.5C477.3 275.3 482.7 274.4 488.1 273.4C493.6 272.4 499.9 270.8 502.3 270.3" fill="none" stroke="#eaffff" stroke-opacity="0.5" stroke-width="2.8" stroke-linecap="round"/>
<path d="M474.3 262.3C476.6 262.8 483.1 264.5 488.1 265.4C493.1 266.3 499.1 267.3 504.1 267.9C509.1 268.5 515.6 268.9 517.9 269.1" fill="none" stroke="#eaffff" stroke-opacity="0.5" stroke-width="2.8" stroke-linecap="round"/>
<path d="M517.9 269.1C516.0 269.6 511.6 270.9 506.6 272.2C501.6 273.5 494.3 275.3 488.1 276.8C481.9 278.3 473.7 280.2 469.6 281.4C465.5 282.6 465.8 283.4 463.5 283.9C461.2 284.4 457.3 284.4 456.1 284.5" fill="none" stroke="#eaffff" stroke-opacity="0.5" stroke-width="2.8" stroke-linecap="round"/>
<path d="M242.5 254.7C245.4 254.3 251.8 253.7 260.0 252.4C268.2 251.1 283.1 248.8 291.9 247.1C300.7 245.4 305.8 243.8 312.6 242.3C319.4 240.8 329.3 238.6 332.6 237.9" fill="none" stroke="#ff1414" stroke-width="1.35" stroke-linecap="round" stroke-linejoin="round"/>
<path d="M321.1 234.4C323.9 235.1 332.2 237.2 338.0 238.6C343.8 240.0 352.8 242.3 355.7 243.1" fill="none" stroke="#ff1414" stroke-width="1.35" stroke-linecap="round" stroke-linejoin="round"/>
<path d="M355.7 243.1C353.6 244.1 347.1 247.1 343.0 249.0C338.9 250.9 333.2 253.7 331.3 254.6" fill="none" stroke="#ff1414" stroke-width="1.35" stroke-linecap="round" stroke-linejoin="round"/>
<path d="M326.7 297.8C330.6 297.4 338.8 297.2 350.4 295.6C362.0 294.0 380.9 290.5 396.1 288.0C411.3 285.5 429.4 282.3 441.7 280.4C453.9 278.5 461.9 277.7 469.6 276.5C477.3 275.3 482.7 274.4 488.1 273.4C493.6 272.4 499.9 270.8 502.3 270.3" fill="none" stroke="#ff1414" stroke-width="1.35" stroke-linecap="round" stroke-linejoin="round"/>
<path d="M474.3 262.3C476.6 262.8 483.1 264.5 488.1 265.4C493.1 266.3 499.1 267.3 504.1 267.9C509.1 268.5 515.6 268.9 517.9 269.1" fill="none" stroke="#ff1414" stroke-width="1.35" stroke-linecap="round" stroke-linejoin="round"/>
<path d="M517.9 269.1C516.0 269.6 511.6 270.9 506.6 272.2C501.6 273.5 494.3 275.3 488.1 276.8C481.9 278.3 473.7 280.2 469.6 281.4C465.5 282.6 465.8 283.4 463.5 283.9C461.2 284.4 457.3 284.4 456.1 284.5" fill="none" stroke="#ff1414" stroke-width="1.35" stroke-linecap="round" stroke-linejoin="round"/>
<path d="M164.5 151.3C165.5 150.8 168.4 149.4 170.5 148.4C172.6 147.4 174.7 146.3 177.0 145.2C179.3 144.1 182.3 142.4 184.3 141.6C186.3 140.8 188.1 140.6 188.9 140.4" fill="none" stroke="#1212ee" stroke-width="1.5" stroke-linecap="round" stroke-linejoin="round"/>
<path d="M188.9 140.4C189.1 141.7 189.8 145.0 190.1 148.3C190.3 151.7 190.4 155.4 190.4 160.5C190.4 165.6 190.0 173.9 189.8 178.8C189.7 183.7 189.6 185.8 189.5 190.0C189.4 194.2 189.6 198.0 189.4 204.0C189.2 210.0 188.5 220.3 188.1 226.0C187.7 231.7 186.7 233.0 186.8 238.0C186.9 243.0 187.9 250.9 188.6 256.0C189.3 261.1 190.1 263.2 191.0 268.7C191.9 274.2 193.2 283.2 193.9 289.0C194.6 294.8 195.2 298.9 195.4 303.5C195.7 308.1 195.4 314.3 195.4 316.5" fill="none" stroke="#1212ee" stroke-width="1.5" stroke-linecap="round" stroke-linejoin="round"/>
<path d="M192.6 138.3C193.5 139.7 195.9 143.6 198.0 146.5C200.1 149.4 203.8 154.3 205.0 155.9" fill="none" stroke="#1212ee" stroke-width="1.5" stroke-linecap="round" stroke-linejoin="round"/>
<path d="M311.4 103.4C313.0 101.5 318.1 95.2 321.3 92.0C324.5 88.8 328.0 86.1 330.6 84.2C333.2 82.3 335.7 81.3 336.7 80.7" fill="none" stroke="#1212ee" stroke-width="1.5" stroke-linecap="round" stroke-linejoin="round"/>
<path d="M336.7 80.7C336.8 82.5 337.1 87.2 337.3 91.3C337.5 95.4 337.7 100.1 338.1 105.6C338.5 111.0 339.2 118.3 339.8 124.0C340.4 129.7 340.8 134.5 341.6 140.0C342.4 145.5 343.5 150.5 344.6 157.1C345.7 163.7 347.1 173.1 348.1 179.4C349.1 185.7 349.4 188.8 350.4 195.0C351.4 201.2 353.6 213.0 354.3 216.6" fill="none" stroke="#1212ee" stroke-width="1.5" stroke-linecap="round" stroke-linejoin="round"/>
<path d="M340.1 80.2C340.8 81.8 342.2 86.7 344.1 89.9C346.0 93.1 348.6 96.6 351.2 99.2C353.8 101.8 358.3 104.5 359.7 105.6" fill="none" stroke="#1212ee" stroke-width="1.5" stroke-linecap="round" stroke-linejoin="round"/>
</svg>
<svg id="gizmo" width="120" height="492" viewBox="0 0 120 492">
  <!-- nav triangles -->
  <g fill="#dedede" stroke="#a6a6a6" stroke-width="1" stroke-linejoin="round">
    <polygon points="14.3,431.3 14.3,443.7 8.4,437.5"/>
    <polygon points="95,431.3 95,443.7 100.8,437.5"/>
    <polygon points="48.3,477.2 60.8,477.2 54.5,483.3"/>
    <polygon points="54.4,391 60.8,397.6 48.4,397.6"/>
    <!-- home -->
    <path d="M92 469.6 L98 475.7 L95.8 475.7 L95.8 481.2 L93.2 481.2 L93.2 477.6 L90.8 477.6 L90.8 481.2 L88.2 481.2 L88.2 475.7 L86 475.7 Z"/>
    <!-- rotate arrows -->
    <path d="M12 455.6 L16.3 460.8 L14 460.8 C14.3 466 15.6 470.5 17.6 473.6 L14.6 475.6 C11.6 471.8 9.9 466.6 9.8 460.8 L7.6 460.8 Z"/>
    <path d="M35.6 479.6 L30.3 484.2 L30.3 481.8 C25 481.9 20.6 480.3 16.8 477.2 L18.8 474.4 C22.2 476.6 25.8 477.6 30.3 477.6 L30.3 475.2 Z"/>
  </g>
  <!-- axes -->
  <line x1="51.6" y1="401" x2="51.6" y2="437" stroke="#a9b4ee" stroke-width="1"/>
  <polygon points="51.6,399.8 53,403.6 50.2,403.6" fill="#7d7df2"/>
  <line x1="57" y1="437.6" x2="24.5" y2="457" stroke="#f0a9a0" stroke-width="0.9"/>
  <polygon points="22.8,458 26,454.6 27,457" fill="#ee5a5a"/>
  <line x1="57" y1="437.6" x2="84" y2="452.4" stroke="#a5d8a5" stroke-width="0.9"/>
  <polygon points="86.2,453.6 82,453.6 83.4,450.8" fill="#5cc05c"/>
  <!-- cube -->
  <g fill="#ececec" fill-opacity="0.62" stroke="#5e5e5e" stroke-width="0.85" stroke-linejoin="round">
    <polygon points="51.6,405.2 81.7,420.5 57.2,437.6 27.6,423"/>
    <polygon points="27.6,423 57.2,437.6 57.3,468.6 27.2,454.9"/>
    <polygon points="57.2,437.6 81.7,420.5 81.8,451.2 57.3,468.6"/>
  </g>
  <text class="cube" x="0" y="0" text-anchor="middle" transform="translate(55,421.6) rotate(145) scale(1,1)" dy="1.6">FRONT</text>
  <text class="cube" x="0" y="0" text-anchor="middle" transform="translate(42.6,446) rotate(82)" dy="1.6">RIGHT</text>
  <text class="cube" x="0" y="0" text-anchor="middle" transform="translate(69.2,445.6) rotate(145)" dy="1.6">TOP</text>
  <text x="51.2" y="398" text-anchor="middle" font-size="7.6" font-weight="bold" fill="#7575f0" transform="rotate(22 51.2 395.4)">Z</text>
  <text x="19.9" y="461.8" text-anchor="middle" font-size="8.2" fill="#f06464" stroke="#f06464" stroke-width="0.25">X</text>
  <text x="90.4" y="458" text-anchor="middle" font-size="8.6" fill="#62c462" stroke="#62c462" stroke-width="0.25">Y</text>
</svg>
<svg id="scale" width="690" height="492" viewBox="0 0 690 492">
  <path d="M279.8 475 V477.6 H417.6 V475" fill="none" stroke="#f2f2f2" stroke-width="3.2" stroke-opacity="0.8"/>
  <path d="M279.8 475 V477.6 H417.6 V475" fill="none" stroke="#2e2e2e" stroke-width="1.4"/>
</svg>
<div id="panel">
  <div class="ico" style="left:7.6px;top:8.6px;"><i></i></div>
  <div class="t" style="left:14.6px;top:5.6px;transform:scaleX(.74);">Scene</div>
  <div class="t" style="left:14.8px;top:17px;transform:scaleX(.78);">No AoA 40-12-12 CFD Model R3 Mesh (Fixed .</div>
  <div class="ico" style="left:26.6px;top:32px;"><i></i><b></b></div>
  <svg style="left:34.6px;top:32px;" width="8" height="5.4" viewBox="0 0 9 6"><path d="M0.4 3 C2 0.6 7 0.6 8.6 3 C7 5.4 2 5.4 0.4 3 Z" fill="#8a8a8a" stroke="#555" stroke-width="0.6"/><circle cx="4.5" cy="3" r="1.3" fill="#444"/></svg>
  <div class="t" style="left:45px;top:29px;transform:scaleX(.8);">region0</div>
  <div id="sb"><div class="thumb"></div><div class="a" style="left:3px;">&lt;</div><div class="a" style="left:131px;">&gt;</div>
    <svg style="left:142px;top:3px;" width="7" height="7" viewBox="0 0 7 7"><g fill="#b5b5b5"><rect x="5" y="1" width="1" height="1"/><rect x="3" y="3" width="1" height="1"/><rect x="5" y="3" width="1" height="1"/><rect x="1" y="5" width="1" height="1"/><rect x="3" y="5" width="1" height="1"/><rect x="5" y="5" width="1" height="1"/></g></svg>
  </div>
</div>
<div id="botline"></div>
<div id="scaletxt">5 [m]</div>
<div class="btn" style="left:540px;width:89px;">
  <svg style="left:9px;top:4px;" width="12" height="12" viewBox="0 0 12 12"><circle cx="6" cy="6" r="4.6" fill="none" stroke="#fff" stroke-width="1.2"/><path d="M3.4 6.6 C4.4 8.6 7.6 8.6 8.6 6.2" fill="none" stroke="#fff" stroke-width="1.5" stroke-linecap="round"/></svg>
  <span style="left:26px;transform:scaleX(.91);">Report an issue</span>
</div>
<div class="btn" style="left:632px;width:45px;">
  <svg style="left:7px;top:4px;" width="14" height="12" viewBox="0 0 14 12"><path d="M1.5 1.5 H11.5 V8 H5 L2.5 10.4 V8 H1.5 Z" fill="#fff"/></svg>
  <span style="left:23px;transform:scaleX(.9);">Chat</span>
</div>
</body>
</html>
